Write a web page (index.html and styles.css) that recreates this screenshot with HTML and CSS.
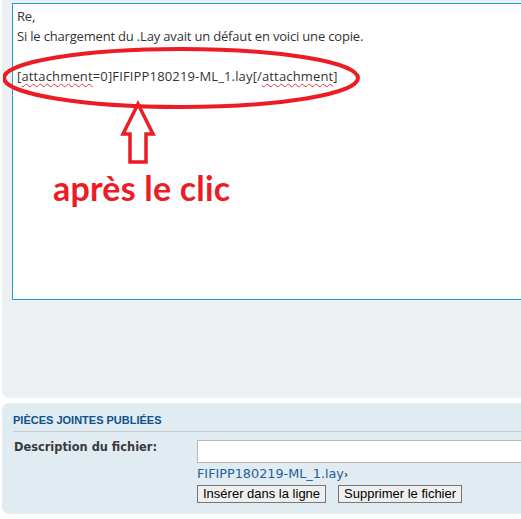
FILE: index.html
```html
<!DOCTYPE html>
<html lang="fr">
<head>
  <meta charset="UTF-8" />
  <link rel="stylesheet" href="styles.css">
  <title>Pièces jointes</title>
</head>
<body>
  <div class="page">
    <div class="panel edit-panel">
      <div class="message-box">
        <p class="line">Re,</p>
        <p class="line">Si le chargement du .Lay avait un défaut en voici une copie.</p>
        <p class="line">&nbsp;</p>
        <p class="line attach-line">[<span class="typo">attachment</span>=0]FIFIPP180219-ML_1.lay[/<span class="typo">attachment</span>]</p>

        <!-- annotation dessinée par-dessus la capture -->
        <svg class="markup" width="400" height="220" viewBox="0 0 400 220">
          <ellipse cx="178" cy="75" rx="177" ry="29" fill="none" stroke="#ec1c24" stroke-width="4"/>
          <path d="M135 101 L120 131 L127 131 L127 159 L143 159 L143 131 L150 131 Z" fill="none" stroke="#ec1c24" stroke-width="3.5" stroke-linejoin="miter"/>
        </svg>
        <div class="markup-label">après le clic</div>
      </div>
    </div>

    <div class="panel files-panel">
      <h3 class="files-title">Pièces jointes publiées</h3>
      <div class="file-row">
        <div class="file-label">Description du fichier:</div>
        <div class="file-body">
          <input class="file-input" type="text">
          <div class="file-name"><a href="#">FIFIPP180219-ML_1.lay</a><span class="arrow">›</span></div>
          <div class="file-buttons">
            <button class="file-button" type="button">Insérer dans la ligne</button>
            <button class="file-button" type="button">Supprimer le fichier</button>
          </div>
        </div>
      </div>
    </div>

    <div class="panel next-panel"></div>
  </div>
</body>
</html>
```

FILE: styles.css
```css
* {
  box-sizing: border-box;
}

html, body {
  margin: 0;
  padding: 0;
  height: 100%;
  overflow: hidden;
  background: #ffffff;
}

.page {
  width: 620px;
  padding-left: 2px;
  display: flex;
  flex-direction: column;
  gap: 5px;
}

.panel {
  border-radius: 7px;
}

.edit-panel {
  background: #ecf0f3;
  border-radius: 0 0 7px 7px;
  padding: 3px 0 98px 10px;
}

.message-box {
  position: relative;
  height: 297px;
  background: #ffffff;
  border: 1px solid #1f9de0;
  border-right: none;
  padding: 2px 4px;
  font-family: "Open Sans", sans-serif;
  font-size: 13px;
  letter-spacing: -0.18px;
  color: #333333;
}

.line {
  margin: 0;
  line-height: 20px;
}

.attach-line {
  letter-spacing: 0.15px;
}

.typo {
  text-decoration: underline wavy #e0363b;
  text-decoration-thickness: 1px;
  text-underline-offset: 2px;
}

.markup {
  position: absolute;
  left: -10px;
  top: -1px;
}

.markup-label {
  position: absolute;
  left: 40px;
  top: 163px;
  font-family: Lato, sans-serif;
  font-weight: 700;
  font-size: 34px;
  letter-spacing: 0.2px;
  color: #ec1c24;
}

.files-panel {
  background: #e1ebf2;
  height: 111px;
  padding: 10px 0 0 11px;
}

.files-title {
  margin: 0;
  padding: 0 0 4px 0;
  border-bottom: 1px solid #cccccc;
  font-family: "Liberation Sans", Arial, sans-serif;
  font-size: 11px;
  font-weight: 700;
  color: #105289;
  text-transform: uppercase;
  line-height: 14px;
}

.file-row {
  display: flex;
  padding-top: 8px;
}

.file-label {
  flex-shrink: 0;
  width: 184px;
  padding: 0 0 0 1px;
  font-family: "DejaVu Sans", Verdana, sans-serif;
  font-size: 11.4px;
  font-weight: 700;
  color: #3a3a3a;
}

.file-body {
  display: flex;
  flex-direction: column;
}

.file-input {
  width: 400px;
  height: 23px;
  border: 1px solid #b4bac0;
  background: #ffffff;
}

.file-name {
  margin-top: 3px;
  font-family: "DejaVu Sans", Verdana, sans-serif;
  font-size: 12.8px;
  line-height: 16px;
}

.file-name a {
  color: #25609a;
  text-decoration: none;
}

.arrow {
  color: #333333;
  font-weight: 700;
  font-size: 10px;
}

.file-buttons {
  display: flex;
  gap: 12px;
  margin-top: 2px;
}

.file-button {
  height: 18px;
  padding: 0 5px;
  border: 1px solid #767676;
  background: #efefef;
  font-family: "Liberation Sans", Arial, sans-serif;
  font-size: 13px;
  color: #000000;
  line-height: 14px;
}

.next-panel {
  background: #e1ebf2;
  height: 20px;
}
```
